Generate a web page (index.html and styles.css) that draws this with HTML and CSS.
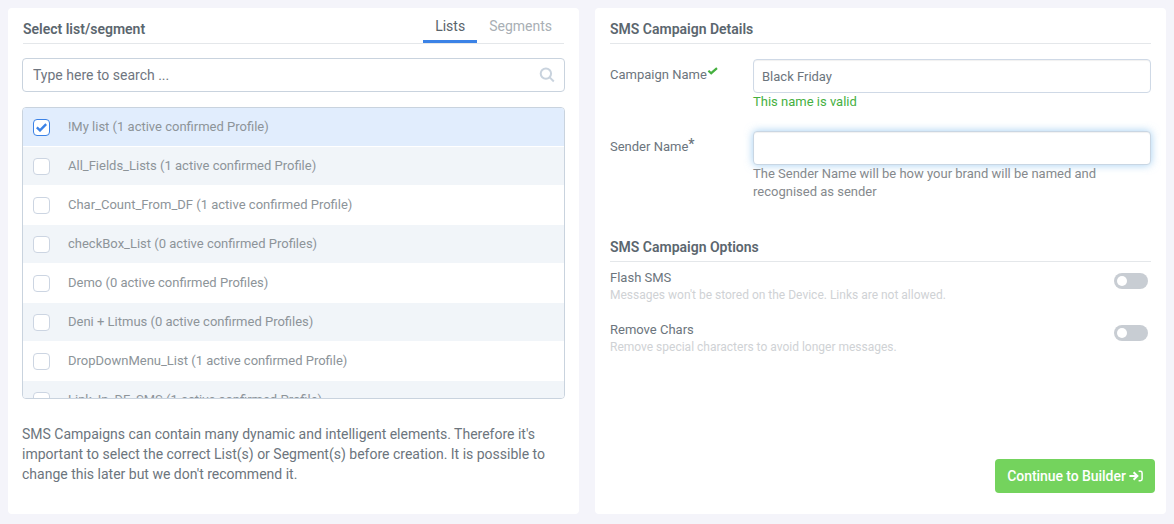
FILE: index.html
```html
<!DOCTYPE html>
<html lang="en">
<head>
    <meta charset="UTF-8">
    <meta name="viewport" content="width=device-width, initial-scale=1.0">
    <title>SMS Campaign</title>
    <link rel="stylesheet" href="styles.css">
</head>
<body>
    <div class="page">
        <section class="panel panel-lists">
            <div class="panel-head">
                <h2>Select list/segment</h2>
                <nav class="tabs">
                    <a class="tab active">Lists</a>
                    <a class="tab">Segments</a>
                </nav>
            </div>

            <div class="search">
                <input type="text" placeholder="Type here to search ...">
                <svg class="search-icon" width="16" height="16" viewBox="0 0 16 16">
                    <circle cx="6.9" cy="6.6" r="5.2"/>
                    <path d="M10.7 10.4L14.8 14.5"/>
                </svg>
            </div>

            <ul class="list">
                <li class="selected">
                    <span class="checkbox"><svg width="11" height="9" viewBox="0 0 11 9"><path d="M0.8 4.4L4 7.4L10.2 1.2"/></svg></span>
                    <span class="name">!My list (1 active confirmed Profile)</span>
                </li>
                <li><span class="checkbox"></span><span class="name">All_Fields_Lists (1 active confirmed Profile)</span></li>
                <li><span class="checkbox"></span><span class="name">Char_Count_From_DF (1 active confirmed Profile)</span></li>
                <li><span class="checkbox"></span><span class="name">checkBox_List (0 active confirmed Profiles)</span></li>
                <li><span class="checkbox"></span><span class="name">Demo (0 active confirmed Profiles)</span></li>
                <li><span class="checkbox"></span><span class="name">Deni + Litmus (0 active confirmed Profiles)</span></li>
                <li><span class="checkbox"></span><span class="name">DropDownMenu_List (1 active confirmed Profile)</span></li>
                <li><span class="checkbox"></span><span class="name">Link_In_DF_SMS (1 active confirmed Profile)</span></li>
            </ul>

            <p class="note">SMS Campaigns can contain many dynamic and intelligent elements. Therefore it's important to select the correct List(s) or Segment(s) before creation. It is possible to change this later but we don't recommend it.</p>
        </section>

        <section class="panel panel-details">
            <div class="panel-head">
                <h2>SMS Campaign Details</h2>
            </div>

            <div class="field">
                <label for="campaignName">Campaign Name<svg class="valid-icon" width="11" height="8" viewBox="0 0 11 8"><path d="M1.4 3.7L4.2 6.2L10 1.2"/></svg></label>
                <div class="control">
                    <input type="text" id="campaignName" value="Black Friday">
                    <p class="valid">This name is valid</p>
                </div>
            </div>

            <div class="field">
                <label for="senderName">Sender Name<span class="required">*</span></label>
                <div class="control">
                    <input type="text" id="senderName" class="focused">
                    <p class="help">The Sender Name will be how your brand will be named and recognised as sender</p>
                </div>
            </div>

            <div class="panel-head options-head">
                <h2>SMS Campaign Options</h2>
            </div>

            <div class="option">
                <div>
                    <h3>Flash SMS</h3>
                    <p>Messages won't be stored on the Device. Links are not allowed.</p>
                </div>
                <span class="switch"></span>
            </div>
            <div class="option">
                <div>
                    <h3>Remove Chars</h3>
                    <p>Remove special characters to avoid longer messages.</p>
                </div>
                <span class="switch"></span>
            </div>

            <button class="continue">
                <span>Continue to Builder</span>
                <svg width="14" height="12" viewBox="0 0 14 12">
                    <path d="M0.4 6H7.6M4.6 2.2L8.4 6L4.6 9.8"/>
                    <path class="door" d="M9.6 1.2H11.4Q13.1 1.2 13.1 2.9V9.1Q13.1 10.8 11.4 10.8H9.6"/>
                </svg>
            </button>
        </section>
    </div>
</body>
</html>
```
FILE: styles.css
```css
* {
    box-sizing: border-box;
}
body {
    margin: 0;
    font-family: Roboto, "Liberation Sans", sans-serif;
    font-size: 14px;
    color: #6c757d;
    background: #f4f4fa;
}
h2, h3, p, ul {
    margin: 0;
    padding: 0;
}
.page {
    display: grid;
    grid-template-columns: 571px 571px;
    gap: 16px;
    height: 524px;
    padding: 8px 8px 10px;
}
.panel {
    display: flex;
    flex-direction: column;
    background: #fff;
    border-radius: 4px;
    padding: 0 14px;
}
.panel-head {
    display: flex;
    justify-content: space-between;
    height: 36px;
    margin: 0 1px;
    border-bottom: 1px solid #e4e7ea;
}
.panel-head h2 {
    font-size: 14px;
    line-height: 18px;
    font-weight: 600;
    color: #5b666e;
    padding-top: 12px;
}
.tabs {
    display: flex;
}
.tab {
    height: 35px;
    padding: 9px 12px 0;
    line-height: 18px;
    color: #a9afb5;
}
.tab.active {
    color: #59636b;
    border-bottom: 3px solid #3b82e6;
}
.search {
    display: flex;
    align-items: center;
    height: 34px;
    margin-top: 14px;
    padding: 0 9px 0 10px;
    border: 1px solid #c9d3de;
    border-radius: 4px;
}
.search input {
    flex: 1;
    border: none;
    outline: none;
    padding: 0;
    font: inherit;
}
.search input::placeholder {
    color: #6f7680;
}
.search-icon {
    fill: none;
    stroke: #c9d3de;
    stroke-width: 2;
}
.list {
    list-style: none;
    height: 292px;
    margin-top: 15px;
    border: 1px solid #c9d3de;
    border-radius: 4px;
    overflow: hidden;
}
.list li {
    display: flex;
    align-items: center;
    height: 38px;
    margin-bottom: 1px;
    padding-left: 10px;
    font-size: 13px;
    color: #8d9499;
}
.list li:nth-child(even) {
    background: #f1f5f9;
}
.list li.selected {
    background: #e1edfd;
}
.name {
    padding-bottom: 2px;
}
.checkbox {
    display: flex;
    align-items: center;
    justify-content: center;
    width: 17px;
    height: 17px;
    margin: 1px 18px 0 0;
    border: 1px solid #ccd5e2;
    border-radius: 4px;
    background: #fff;
}
.selected .checkbox {
    border-color: #3b82e6;
}
.checkbox svg {
    fill: none;
    stroke: #3b82e6;
    stroke-width: 2.4;
}
.note {
    margin-top: 25px;
    line-height: 20px;
}
.field {
    display: grid;
    grid-template-columns: 143px 398px;
    margin: 15px 1px 0;
    font-size: 13px;
    height: 57px;
}
.field label {
    padding-top: 8px;
    line-height: 16px;
}
.valid-icon {
    margin-top: -5px;
    vertical-align: 4px;
    fill: none;
    stroke: #45b03f;
    stroke-width: 2.2;
}
.required {
    font-size: 14px;
    line-height: 0;
    font-weight: 500;
    vertical-align: 2px;
}
.control input {
    display: block;
    width: 100%;
    height: 34px;
    padding: 0 8px;
    border: 1px solid #cfd9e6;
    border-radius: 4px;
    outline: none;
    font: inherit;
    color: #6c757d;
    box-shadow: inset 0 1px 1px rgba(0, 0, 0, 0.06);
}
.control input.focused {
    border-color: #c9d6e3;
    box-shadow: inset 0 1px 1px rgba(0, 0, 0, 0.06), 0 0 8px rgba(102, 175, 233, 0.6);
}
.control p {
    line-height: 18px;
    color: #85898d;
}
.control p.valid {
    color: #45b03f;
}
.options-head {
    height: 36px;
    margin-top: 38px;
}
.option {
    display: flex;
    justify-content: space-between;
    height: 52px;
    padding: 7px 4px 0 1px;
}
.option h3 {
    font-size: 13px;
    line-height: 18px;
    font-weight: 400;
}
.option p {
    font-size: 12px;
    line-height: 16px;
    color: #cfd2d5;
}
.switch {
    width: 34px;
    height: 16px;
    margin-top: 4px;
    padding: 3px;
    border-radius: 8px;
    background: #c8cdd3;
}
.switch::before {
    content: "";
    display: block;
    width: 10px;
    height: 10px;
    border-radius: 50%;
    background: #fff;
}
.continue {
    display: flex;
    align-items: center;
    justify-content: center;
    gap: 3px;
    align-self: flex-end;
    width: 160px;
    height: 34px;
    margin: auto -3px 21px 0;
    padding: 0;
    border: none;
    border-radius: 4px;
    background: #74d35d;
    color: #fff;
    font: inherit;
    font-weight: 500;
    letter-spacing: -0.06px;
}
.continue svg {
    fill: none;
    stroke: #fff;
    stroke-width: 2;
}
.continue .door {
    stroke-width: 1.5;
}
```
